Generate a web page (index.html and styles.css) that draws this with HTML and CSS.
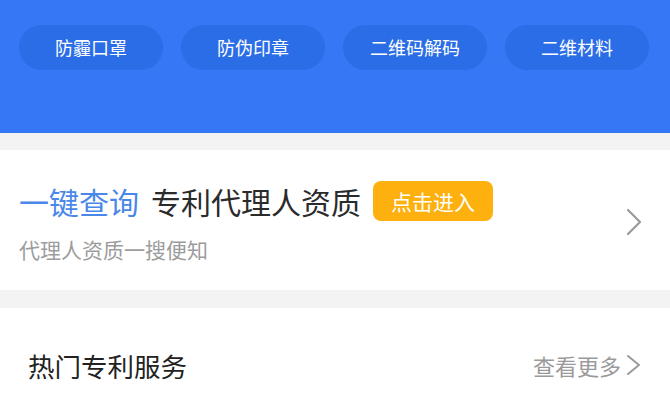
FILE: index.html
```html
<!DOCTYPE html>
<html lang="zh-CN">
<head>
    <meta charset="UTF-8">
    <meta name="viewport" content="width=device-width, initial-scale=1.0">
    <title>专利服务</title>
    <link rel="stylesheet" href="styles.css">
</head>
<body>
    <div class="header">
        <div class="tags">
            <a href="#" class="tag">防霾口罩</a>
            <a href="#" class="tag">防伪印章</a>
            <a href="#" class="tag">二维码解码</a>
            <a href="#" class="tag">二维材料</a>
        </div>
    </div>

    <div class="card">
        <div class="card-main">
            <div class="card-title">
                <span class="accent">一键查询</span>
                <span class="name">专利代理人资质</span>
                <a href="#" class="enter-btn">点击进入</a>
            </div>
            <p class="card-sub">代理人资质一搜便知</p>
        </div>
        <svg class="arrow" width="16" height="28" viewBox="0 0 16 28">
            <path d="M2 2 L14 14 L2 26" fill="none" stroke="#9a9a9a" stroke-width="2.2" stroke-linecap="round" stroke-linejoin="round"/>
        </svg>
    </div>

    <div class="section">
        <div class="section-head">
            <h3>热门专利服务</h3>
            <a href="#" class="more">
                查看更多
                <svg width="18" height="22" viewBox="0 0 18 22">
                    <path d="M3 2 L14 11 L3 20" fill="none" stroke="#9a9a9a" stroke-width="2" stroke-linecap="round" stroke-linejoin="round"/>
                </svg>
            </a>
        </div>
    </div>
</body>
</html>
```

FILE: styles.css
```css
:root {
    --blue: #3577f5;
    --blue-dark: #2a6de6;
    --accent: #4a87e9;
    --yellow: #fdb00e;
    --gray-bg: #f3f3f3;
}

* {
    margin: 0;
    padding: 0;
    box-sizing: border-box;
    font-family: "Noto Sans CJK SC", "Noto Sans", sans-serif;
}

body {
    background: var(--gray-bg);
    overflow: hidden;
}

a {
    text-decoration: none;
}

.header {
    height: 133px;
    padding-top: 25px;
    background: var(--blue);
}

.tags {
    display: grid;
    grid-template-columns: repeat(4, 1fr);
    gap: 18px;
    padding: 0 21px 0 19px;
}

.tag {
    height: 45px;
    line-height: 45px;
    border-radius: 23px;
    background: var(--blue-dark);
    color: #fff;
    font-size: 18px;
    text-align: center;
}

.card {
    display: flex;
    justify-content: space-between;
    align-items: flex-start;
    height: 140px;
    margin-top: 17px;
    padding: 31px 28px 0 19px;
    background: #fff;
}

.card-title {
    display: flex;
    align-items: center;
    gap: 12px;
    height: 40px;
    font-size: 30px;
    line-height: 40px;
}

.card-title .accent {
    color: var(--accent);
}

.card-title .name {
    color: #2b2b2b;
}

.enter-btn {
    height: 40px;
    padding: 0 18px;
    border-radius: 8px;
    background: var(--yellow);
    color: #fff;
    font-size: 21px;
    line-height: 40px;
}

.card-sub {
    margin-top: 14px;
    font-size: 21px;
    line-height: 28px;
    color: #9c9c9c;
}

.arrow {
    margin-top: 27px;
}

.section {
    margin-top: 18px;
    background: #fff;
    height: 120px;
}

.section-head {
    display: flex;
    justify-content: space-between;
    align-items: center;
    height: 114px;
    padding: 0 27px 0 28px;
}

.section-head h3 {
    font-size: 26.5px;
    font-weight: 400;
    color: #222;
}

.more {
    display: flex;
    align-items: center;
    gap: 4px;
    font-size: 22px;
    color: #9a9a9a;
}
```
